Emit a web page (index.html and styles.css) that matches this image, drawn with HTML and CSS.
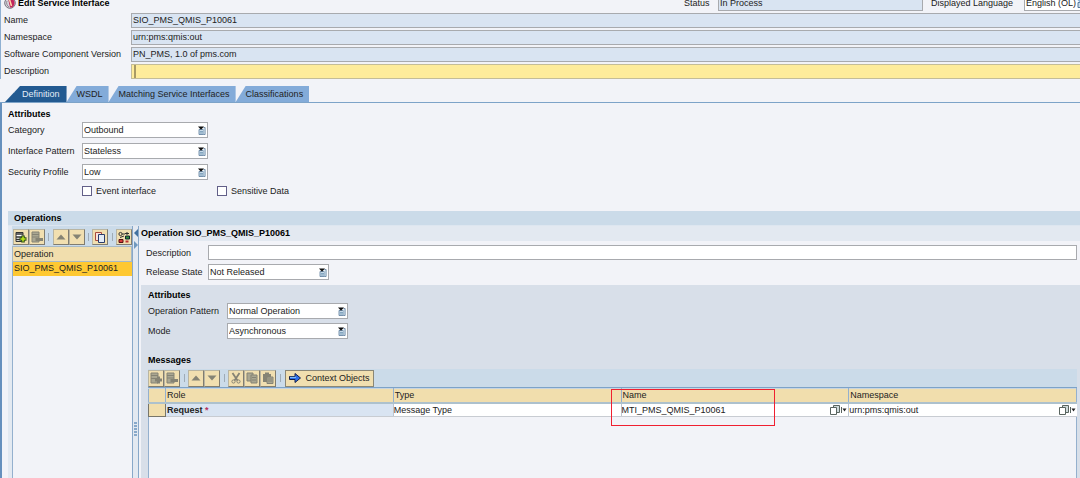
FILE: index.html
```html
<!DOCTYPE html>
<html lang="en">
<head>
<meta charset="utf-8">
<title>Edit Service Interface</title>
<link rel="stylesheet" href="styles.css">
</head>
<body>
<svg class="defs" aria-hidden="true">
  <symbol id="i-list" viewBox="0 0 8 9"><path d="M1 3.5h4.5v5H1z" fill="#c9dcea" stroke="#58789a" stroke-width=".8"/><path d="M5.500 1.500h1.600v7h-1.600" fill="#d9e8f2" stroke="#58789a" stroke-width=".8"/><path d="M2 5.600h3M2 7h3" stroke="#5f86a8" stroke-width=".7"/><path d="M0 .500h6L3 3.800z" fill="#111"/></symbol>
  <symbol id="i-add" viewBox="0 0 12 12"><path d="M1 1.500h7v9H1z" fill="#fff" stroke="#333"/><path d="M1 3h7M1 6h7M1 8.500h4" stroke="#333" stroke-width="1.400"/><path d="M8 4.500v7M4.500 8h7" stroke="#35551c" stroke-width="3.600"/><path d="M8 5.500v5M5.500 8h5" stroke="#b9e619" stroke-width="1.600"/></symbol>
  <symbol id="i-addoff" viewBox="0 0 12 12"><path d="M1 1h7v10H1z" fill="#aaa792" stroke="#858374"/><path d="M1 3.500h7M1 6.500h7" stroke="#858374"/><path d="M8.500 4.500v7M5 8h7" stroke="#858374" stroke-width="3"/></symbol>
  <symbol id="i-remoff" viewBox="0 0 12 12"><path d="M1 1h7v10H1z" fill="#aaa792" stroke="#858374"/><path d="M1 3.500h7M1 6h7" stroke="#858374"/><path d="M4.500 8.500h7.500" stroke="#858374" stroke-width="3"/></symbol>
  <symbol id="i-up" viewBox="0 0 12 12"><path d="M1.500 8.500 6 3.500l4.500 5z" fill="#858374"/></symbol>
  <symbol id="i-down" viewBox="0 0 12 12"><path d="M1.500 3.500 6 8.500l4.500-5z" fill="#858374"/></symbol>
  <symbol id="i-copy" viewBox="0 0 12 12"><path d="M1.500 1.500h6v8h-6z" fill="#f8e3dc" stroke="#a84a3c"/><path d="M4.500 3.500h6v8h-6z" fill="#e3ecf6" stroke="#2a3c6c"/></symbol>
  <symbol id="i-used" viewBox="0 0 12 12"><circle cx="2.500" cy="3" r="1.600" fill="none" stroke="#333"/><path d="M4 3h3M9 1v3M7 2.500h4M2 6.500 6 5" stroke="#333"/><path d="M7.500 5h4v3h-4z" fill="#2f8f3a" stroke="#123"/><path d="M1 8.500h4v3H1z" fill="#d63a3a" stroke="#511"/><path d="M7.500 9.500h3v2h-3z" fill="#b93232"/></symbol>
  <symbol id="i-cut" viewBox="0 0 12 12"><path d="m2.500 1 5 7.500M9.500 1 4.500 8.500" stroke="#858374" stroke-width="1.800"/><circle cx="3.500" cy="9.500" r="1.600" fill="none" stroke="#858374"/><circle cx="8.500" cy="9.500" r="1.600" fill="none" stroke="#858374"/></symbol>
  <symbol id="i-copyoff" viewBox="0 0 12 12"><path d="M1 1h6v8H1z" fill="#aaa792" stroke="#858374"/><path d="M5 3h6v8H5z" fill="#aaa792" stroke="#858374"/><path d="M6 5.500h4M6 8h4" stroke="#858374"/></symbol>
  <symbol id="i-paste" viewBox="0 0 12 12"><path d="M1 2h8v8H1z" fill="#858374"/><path d="M3 .500h4v2H3z" fill="#858374"/><path d="M5 5h6v6.500H5z" fill="#aaa792" stroke="#858374"/><path d="M6 7h4M6 9h4" stroke="#858374"/></symbol>
  <symbol id="i-help" viewBox="0 0 18 12"><path d="M4.500 1.500h6v7h-6z" fill="#cfdadb" stroke="#59645f"/><path d="M1.500 3.500h6v7h-6z" fill="#fff" stroke="#59645f"/><path d="M12.500 3v6" stroke="#59645f"/><path d="M13.500 4.500h4l-2 3z" fill="#222"/></symbol>
</svg>

<main class="editor">
  <header class="titlebar">
    <svg class="logo" viewBox="0 0 12 12" aria-hidden="true"><circle cx="6" cy="6" r="5.300" fill="#d9d6dc" stroke="#77727c"/><path d="M4 1.500c4-1 7 1.500 6.500 5S7 11 6 10.500z" fill="#c2255c"/><path d="M5.500 2.500 7.500 9" stroke="#ffd9a8" stroke-width="1.500"/><path d="M3 4c-1 2 0 5 2 6" stroke="#8c8892" fill="none"/></svg>
    <h1 class="title">Edit Service Interface</h1>
    <label class="status-label" for="status">Status</label>
    <input class="field readonly status" id="status" value="In Process" readonly>
    <label class="lang-label" for="lang">Displayed Language</label>
    <span class="picker lang"><select id="lang"><option>English (OL)</option></select><svg viewBox="0 0 3 9"><path d="M1 3.500h4v5H1z" fill="#c9dcea" stroke="#58789a"/><path d="M0 .500h6L3 3.800z" fill="#8fb4d8"/></svg></span>
  </header>

  <section class="general">
    <label for="name">Name</label><input class="field readonly" id="name" value="SIO_PMS_QMIS_P10061" readonly>
    <label for="ns">Namespace</label><input class="field readonly" id="ns" value="urn:pms:qmis:out" readonly>
    <label for="scv">Software Component Version</label><input class="field readonly" id="scv" value="PN_PMS, 1.0 of pms.com" readonly>
    <label for="desc">Description</label><span class="field focused"><i class="caret"></i><input id="desc"></span>
  </section>

  <nav class="tabs">
    <button class="tab active">Definition</button>
    <button class="tab">WSDL</button>
    <button class="tab">Matching Service Interfaces</button>
    <button class="tab">Classifications</button>
  </nav>

  <section class="definition">
    <h2>Attributes</h2>
    <div class="form attrs">
      <label for="cat">Category</label><span class="picker"><select id="cat"><option>Outbound</option></select><svg><use href="#i-list"/></svg></span>
      <label for="pat">Interface Pattern</label><span class="picker"><select id="pat"><option>Stateless</option></select><svg><use href="#i-list"/></svg></span>
      <label for="sec">Security Profile</label><span class="picker"><select id="sec"><option>Low</option></select><svg><use href="#i-list"/></svg></span>
    </div>
    <div class="checks">
      <label><input type="checkbox">Event interface</label>
      <label><input type="checkbox">Sensitive Data</label>
    </div>

    <div class="operations">
      <h2 class="bar">Operations</h2>
      <div class="split">
        <aside class="oplist">
          <div class="toolbar">
            <button class="tool" aria-label="Add"><svg><use href="#i-add"/></svg></button>
            <button class="tool" aria-label="Remove" disabled><svg><use href="#i-remoff"/></svg></button>
            <i class="sep"></i>
            <button class="tool" aria-label="Up" disabled><svg><use href="#i-up"/></svg></button>
            <button class="tool" aria-label="Down" disabled><svg><use href="#i-down"/></svg></button>
            <i class="sep"></i>
            <button class="tool" aria-label="Copy"><svg><use href="#i-copy"/></svg></button>
            <i class="sep"></i>
            <button class="tool" aria-label="Where used"><svg><use href="#i-used"/></svg></button>
          </div>
          <table class="optable">
            <thead><tr><th>Operation</th></tr></thead>
            <tbody><tr><td>SIO_PMS_QMIS_P10061</td></tr></tbody>
          </table>
        </aside>
        <div class="splitter">
          <svg class="arrows" viewBox="0 0 6 20"><path d="M5 0v8L1 4z" fill="#41719f"/><path d="M1 12v8l4-4z" fill="#6f98bf"/></svg>
          <span class="grip"></span>
        </div>
        <div class="detail">
          <h2 class="dhead">Operation SIO_PMS_QMIS_P10061</h2>
          <div class="form opform">
            <label for="odesc">Description</label><input class="field" id="odesc">
            <label for="rel">Release State</label><span class="picker"><select id="rel"><option>Not Released</option></select><svg><use href="#i-list"/></svg></span>
          </div>
          <div class="inner">
            <h2>Attributes</h2>
            <div class="form opattrs">
              <label for="op">Operation Pattern</label><span class="picker"><select id="op"><option>Normal Operation</option></select><svg><use href="#i-list"/></svg></span>
              <label for="mode">Mode</label><span class="picker"><select id="mode"><option>Asynchronous</option></select><svg><use href="#i-list"/></svg></span>
            </div>
            <h2>Messages</h2>
            <div class="messages">
              <div class="toolbar">
                <button class="tool" aria-label="Add" disabled><svg><use href="#i-addoff"/></svg></button>
                <button class="tool" aria-label="Remove" disabled><svg><use href="#i-remoff"/></svg></button>
                <i class="sep"></i>
                <button class="tool" aria-label="Up" disabled><svg><use href="#i-up"/></svg></button>
                <button class="tool" aria-label="Down" disabled><svg><use href="#i-down"/></svg></button>
                <i class="sep"></i>
                <button class="tool" aria-label="Cut" disabled><svg><use href="#i-cut"/></svg></button>
                <button class="tool" aria-label="Copy" disabled><svg><use href="#i-copyoff"/></svg></button>
                <button class="tool" aria-label="Paste" disabled><svg><use href="#i-paste"/></svg></button>
                <i class="sep"></i>
                <button class="tool wide"><svg viewBox="0 0 12 10"><path d="M.500 3.500h5.500v-3l5.500 4.500-5.500 4.500v-3H.500z" fill="#2f6fe8" stroke="#14204a"/><path d="M1 4.300h6" stroke="#8fd0ff"/></svg>Context Objects</button>
              </div>
              <table class="msgtable">
                <colgroup><col class="handle"><col><col><col><col></colgroup>
                <thead><tr><th></th><th>Role</th><th>Type</th><th class="marked">Name<span class="marker"></span></th><th>Namespace</th></tr></thead>
                <tbody><tr><td class="rowhead"></td><td class="role">Request<b class="req"> *</b></td><td>Message Type</td>
                  <td><div class="cell">MTI_PMS_QMIS_P10061<svg><use href="#i-help"/></svg></div></td>
                  <td><div class="cell">urn:pms:qmis:out<svg><use href="#i-help"/></svg></div></td></tr></tbody>
              </table>
            </div>
          </div>
        </div>
      </div>
    </div>
  </section>
</main>
</body>
</html>
```
FILE: styles.css
```css
* { box-sizing: border-box; }
body {
  margin: 0;
  background: #f2f3f8;
  color: #222;
  font: 9px/12px "Liberation Sans", Arial, sans-serif;
}
input, select, button { font: inherit; color: inherit; margin: 0; border-radius: 0; }
h1, h2 { margin: 0; font-size: 9px; line-height: 12px; color: #000; }
.defs { position: absolute; width: 0; height: 0; }

.editor { min-height: 100vh; display: flex; flex-direction: column; }

.field {
  width: 100%;
  height: 15px;
  padding: 0 1px 1px;
  border: 1px solid #a8aaae;
  background: #fff;
  outline: none;
}
.readonly { background: #d9e4f2; }
.focused { display: flex; align-items: center; padding: 0 0 0 2px; background: #feec9b; border-color: #c4bd98; }
.focused input { flex: 1; height: 12px; border: 0; background: none; outline: none; }
.caret { width: 2px; height: 13px; background: #a89a66; }

.picker { display: grid; grid-template-columns: 1fr 10px; align-items: center; }
.picker select {
  grid-area: 1 / 1 / 2 / 3;
  appearance: none;
  width: 100%;
  height: 16px;
  padding: 0 1px;
  border: 1px solid #a8aaae;
  background: #fff;
}
.picker svg { grid-area: 1 / 2; width: 8px; height: 9px; pointer-events: none; z-index: 1; }

.titlebar {
  display: flex;
  align-items: flex-end;
  height: 11px;
  padding-left: 3px;
  border-left: 1px solid #8fb0d2;
}
.titlebar > * { flex: none; }
.titlebar label, .titlebar .title { margin-bottom: 2px; }
.logo { width: 12px; height: 12px; margin: 0 2px 2px 0; }
.titlebar .title { flex: 1; white-space: nowrap; }
.status-label { width: 34px; }
.titlebar .status { width: 205px; }
.lang-label { margin-left: 8px; width: 93px; }
.titlebar .lang { width: 56px; grid-template-columns: 1fr 3px; }
.lang select { border-right: 0; }
.titlebar .lang svg { width: 3px; }

.general {
  display: grid;
  grid-template-columns: 127px 1fr;
  row-gap: 2px;
  align-items: center;
  padding: 2px 0 0 3px;
  border-left: 1px solid #8fb0d2;
}
.general label { padding-bottom: 2px; }
.general .field { border-right: 0; }

.tabs { display: flex; padding: 7px 0 0 5px; border-bottom: 1px solid #7da3c8; }
.tab {
  height: 16px;
  border: 0;
  padding: 0 6px 0 10px;
  background: #83abd9;
  clip-path: polygon(0 100%, 10px 0, 100% 0, 100% 100%);
}
.tab.active { padding: 0 7px 0 17px; background: #235a91; color: #e3edf7; clip-path: polygon(0 100%, 15px 0, 100% 0, 100% 100%); }

.definition {
  flex: 1;
  display: flex;
  flex-direction: column;
  padding: 5px 0 0 6px;
  border-left: 2px solid #6690bd;
}
.form { display: grid; align-items: center; }
.attrs { grid-template-columns: 74px 126px; row-gap: 5px; padding-top: 2px; }

.checks { display: flex; padding: 5px 0 0 74px; }
.checks label { display: flex; align-items: center; gap: 4px; width: 135px; }
.checks input { appearance: none; width: 10px; height: 10px; border: 1px solid #625f88; background: #fff; }

.operations { flex: 1; display: flex; flex-direction: column; margin-top: 14px; }
.bar { background: #cbdbe9; padding: 1px 6px; border-bottom: 1px solid #dde6f0; }
.split { flex: 1; display: flex; }
.oplist { width: 124px; border-left: 4px solid #e3e9f1; box-shadow: inset 1px 0 #94b0ce; background: #f2f3f8; }
.toolbar { display: flex; align-items: center; background: #cbdbe9; }
.oplist .toolbar { height: 20px; padding: 1px 0 0 1px; }
.tool {
  flex: none;
  display: flex;
  align-items: center;
  justify-content: center;
  width: 16px;
  height: 16px;
  padding: 0;
  background: #f1dfb0;
  border: 1px solid #807c70;
  border-top-color: #b9b5a2;
  border-left-color: #b9b5a2;
}
.tool svg { width: 12px; height: 12px; }
.sep { width: 8px; height: 8px; background: linear-gradient(#9fabb6, #9fabb6) center / 1px 100% no-repeat; }
table { border-collapse: collapse; width: 100%; table-layout: fixed; }
th { font-weight: normal; text-align: left; background: #f1dead; }
th, td { padding: 0 1px; }
.optable th { height: 15px; border: 1px solid #a7b9c6; }
.optable td { height: 14px; padding-bottom: 1px; background: #fec832; border-left: 1px solid #94b0ce; }

.splitter {
  width: 7px;
  display: flex;
  flex-direction: column;
  align-items: center;
  background: #e3e9f1;
  border: 1px solid #88a8c9;
  border-width: 0 1px;
}
.arrows { width: 6px; height: 20px; margin-top: 3px; }
.grip { width: 3px; height: 14px; margin-top: 173px; background: repeating-linear-gradient(#88a8c9 0 2px, #e3e9f1 2px 3px); }

.detail { flex: 1; min-width: 0; display: flex; flex-direction: column; }
.dhead { padding: 1px 2px 2px; background: #e3e9f1; }
.opform { grid-template-columns: 62px 121px 1fr; row-gap: 4px; padding: 4px 3px 5px 7px; column-gap: 0; }
.opform .field { grid-column: 2 / 4; }
.opform label { grid-column: 1; }
.inner { flex: 1; display: flex; flex-direction: column; margin-left: 2px; padding: 4px 3px 0 7px; background: #d8dfe9; }
.opattrs { grid-template-columns: 79px 121px; row-gap: 4px; padding: 2px 0 15px; }
.messages { flex: 1; margin-top: 3px; background: #f2f3f8; box-shadow: inset 1px 0 #94b0ce, inset -1px 0 #94b0ce; }
.messages .toolbar { height: 19px; border-bottom: 1px solid #7da3c8; }
.messages .tool { height: 17px; }
.messages .tool.wide { width: 89px; margin-left: 1px; gap: 4px; border-color: #8b8776; }
.tool.wide svg { height: 10px; }
.handle { width: 17px; }
.msgtable th { height: 14px; border: 1px solid #94b0ce; border-top-color: #c9d5df; border-bottom: 2px solid #adc1cd; }
.msgtable td { height: 13px; background: #fff; border-bottom: 1px solid #c8ccd2; border-left: 1px solid #bcc6d2; padding: 0; }
.msgtable td.role { background: #d9e4f2; font-weight: bold; padding-left: 1px; }
.msgtable td.rowhead { background: #f1dead; border: 1px solid #77756a; }
.req { color: #b8325e; }
.cell { display: flex; align-items: center; justify-content: space-between; padding-right: 1px; }
.cell svg { width: 18px; height: 12px; }
.marked { position: relative; }
.marker { position: absolute; left: -11px; top: 0; width: 164px; height: 37px; border: 1px solid #f02030; z-index: 2; }
```
